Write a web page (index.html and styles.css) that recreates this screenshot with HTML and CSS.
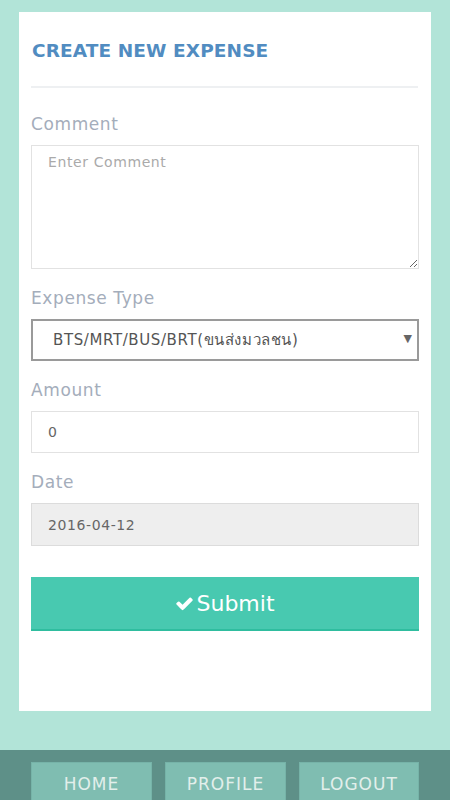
FILE: index.html
```html
<!DOCTYPE html>
<html>
<head>
<meta charset="utf-8">
<link rel="stylesheet" href="styles.css">
</head>
<body>
<div class="page">
  <div class="card">
    <h1 class="title">CREATE NEW EXPENSE</h1>
    <hr class="rule">
    <form class="form">
      <div class="field">
        <label class="label">Comment</label>
        <textarea class="control textarea" placeholder="Enter Comment"></textarea>
      </div>
      <div class="field">
        <label class="label">Expense Type</label>
        <div class="select-wrap">
          <select class="control select">
            <option>BTS/MRT/BUS/BRT(ขนส่งมวลชน)</option>
          </select>
          <span class="arrow">▼</span>
        </div>
      </div>
      <div class="field">
        <label class="label">Amount</label>
        <input class="control input" type="text" value="0">
      </div>
      <div class="field">
        <label class="label">Date</label>
        <input class="control input disabled" type="text" value="2016-04-12" readonly>
      </div>
      <button type="button" class="submit"><svg class="check" viewBox="0 0 1792 1792" width="19" height="19"><path fill="#fff" d="M1671 566q0 40-28 68l-724 724-136 136q-28 28-68 28t-68-28l-136-136-362-362q-28-28-28-68t28-68l136-136q28-28 68-28t68 28l294 295 656-657q28-28 68-28t68 28l136 136q28 28 28 68z"/></svg>Submit</button>
    </form>
  </div>
</div>
<nav class="footer">
  <a class="nav-btn">HOME</a>
  <a class="nav-btn">PROFILE</a>
  <a class="nav-btn">LOGOUT</a>
</nav>
</body>
</html>
```
FILE: styles.css
```css
* { box-sizing: border-box; }
html, body {
  margin: 0;
  padding: 0;
  height: 800px;
  overflow: hidden;
}
body {
  background: #b2e4d8;
  font-family: "DejaVu Sans", "Noto Sans", sans-serif;
  display: flex;
  flex-direction: column;
}
.page {
  padding: 12px 19px 0;
  height: 750px;
}
.card {
  background: #fff;
  height: 699px;
  padding: 12px 13px;
}
.title {
  margin: 0;
  padding-top: 15px;
  font-size: 18.5px;
  font-weight: bold;
  color: #518cc1;
  letter-spacing: 0.1px;
  line-height: 24px;
}
.rule {
  margin: 23px 0 0;
  border: 0;
  border-top: 2px solid #eef0f2;
  width: 387px;
  margin-left: -1px;
}
.form {
  margin-left: -1px;
  width: 388px;
}
.field {
  margin-top: 26px;
}
.field + .field { margin-top: 19px; }
.label {
  display: block;
  font-size: 17px;
  letter-spacing: 0.6px;
  color: #a4adbb;
  line-height: 20px;
  margin-bottom: 11px;
}
.control {
  display: block;
  width: 100%;
  font-family: inherit;
  border: 1px solid #e2e2e2;
  background: #fff;
  color: #666;
  outline: none;
  border-radius: 0;
}
.textarea {
  height: 124px;
  padding: 8px 16px;
  font-size: 14px;
  letter-spacing: 0.6px;
  resize: vertical;
}
.textarea::placeholder { color: #aaa; }
.select-wrap { position: relative; }
.select {
  appearance: none;
  -webkit-appearance: none;
  height: 42px;
  border: 2px solid #9a9a9a;
  padding: 0 20px;
  font-size: 15px;
  letter-spacing: 0.6px;
  color: #555;
}
.arrow {
  position: absolute;
  right: 7px;
  top: 13px;
  font-size: 11px;
  color: #666;
}
.input {
  height: 42px;
  padding: 0 16px;
  font-size: 14px;
  letter-spacing: 0.6px;
}
.input.disabled {
  background: #eee;
  border-color: #dcdcdc;
  height: 43px;
}
.submit {
  display: flex;
  justify-content: center;
  align-items: center;
  width: 100%;
  height: 54px;
  margin-top: 31px;
  background: #48c9b0;
  border: 0;
  border-bottom: 2px solid #2fbd9f;
  color: #fff;
  font-family: inherit;
  font-size: 22px;
  padding: 0;
}
.check { margin-right: 2px; margin-top: 1px; }
.footer {
  height: 50px;
  background: #5e9088;
  padding: 12px 32px 0 31px;
  display: grid;
  grid-template-columns: 121px 121px 120px;
  column-gap: 13px;
}
.nav-btn {
  display: flex;
  justify-content: center;
  padding-top: 11px;
  background: #7fbdb1;
  border: 1px solid #76b3a8;
  border-bottom: 0;
  color: #e2efeb;
  font-size: 17px;
  letter-spacing: 1px;
  height: 40px;
}
```
